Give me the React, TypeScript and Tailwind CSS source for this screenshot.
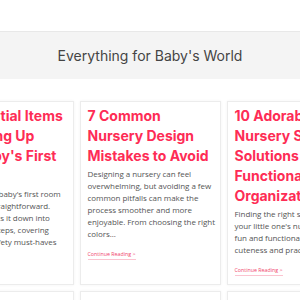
const POSTS = [
  {
    title: "10 Essential Items for Setting Up Your Baby's First Nursery",
    body: "Setting up your baby's first room\nis simple and straightforward.\nOur guide breaks it down into\neasy-to-follow steps, covering\nfrom cribs to safety must-haves",
  },
  {
    title: "7 Common Nursery Design Mistakes to Avoid",
    body: "Designing a nursery can feel\noverwhelming, but avoiding a few\ncommon pitfalls can make the\nprocess smoother and more\nenjoyable. From choosing the right\ncolors...",
  },
  {
    title: "10 Adorable Nursery Storage Solutions for Functional Organization",
    body: "Finding the right storage for\nyour little one's nursery can be\nfun and functional! We've got the\ncuteness and practicality covered.",
  },
  { title: "Essential Baby Gear for New Parents", body: "" },
  { title: "5 Tips for a Calm and Cozy Nursery", body: "" },
  { title: "7 Clever Space-Saving Ideas", body: "" },
];

function Card({ title, body }: { title: string; body: string }) {
  return (
    <div className="flex min-w-0 flex-col overflow-hidden border border-[#ececec] bg-white px-[7px] pt-[4px] pb-[8px] shadow-[0_0_3px_rgba(0,0,0,0.05)]">
      <h3 className="text-[14px] font-bold leading-[20px] text-[#fe2c55] font-['Inter',sans-serif]">
        {title}
      </h3>
      {body && (
        <p className="mt-[2px] whitespace-pre text-[8px] leading-[12px] tracking-[-0.05px] text-[#555] font-['Open_Sans',sans-serif]">
          {body}
        </p>
      )}
      {body && (
        <a className="mt-[10px] self-start border-b border-[#fbc4d0] text-[5.3px] leading-[9px] text-[#f0446c] font-['Open_Sans',sans-serif]">
          Continue Reading &gt;
        </a>
      )}
    </div>
  );
}

export default function App() {
  return (
    <div className="min-h-[300px] overflow-hidden bg-white">
      <div className="h-[31px]" />
      <div className="flex h-[48px] items-center justify-center border-t border-[#e8e8e8] bg-[#f4f4f4]">
        <h2 className="text-[14px] text-[#444] font-['Inter',sans-serif]">Everything for Baby's World</h2>
      </div>
      <div className="flex justify-center pt-[22px]">
        <div className="grid w-[435px] shrink-0 grid-cols-3 gap-[6px]">
          {POSTS.map((p) => (
            <Card key={p.title} title={p.title} body={p.body} />
          ))}
        </div>
      </div>
    </div>
  );
}
